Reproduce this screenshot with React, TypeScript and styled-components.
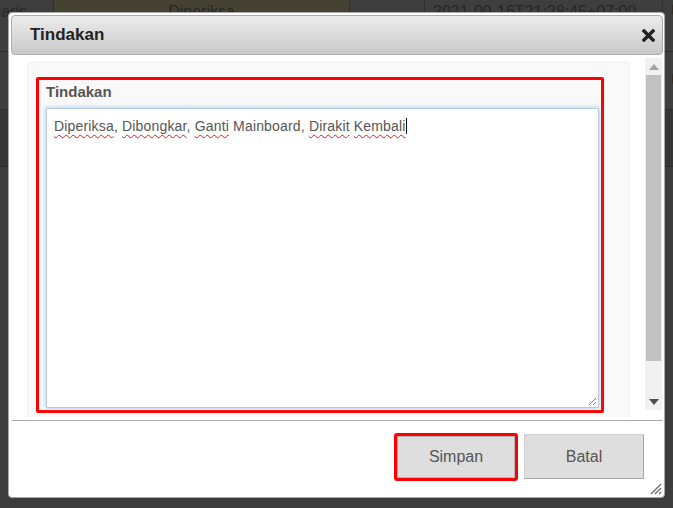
import styled, { createGlobalStyle } from 'styled-components'

const GlobalStyle = createGlobalStyle`
  html, body {
    margin: 0;
    padding: 0;
    background: #3c3c3c;
  }
  * {
    box-sizing: border-box;
  }
`

const App = () => {
  return (
    <>
      <GlobalStyle />
      <Page>
        {/* table behind the modal overlay */}
        <BackTable>
          <BackRow $height={80}>
            <BackCell $width={54} $align="right">
              garis
            </BackCell>
            <BackCell $width={296} $align="center" $olive>
              Diperiksa
            </BackCell>
            <BackCell $width={75} />
            <BackCell $width={238}>2021-09-16T21:28:45+07:00</BackCell>
            <BackCell $width={10}>U</BackCell>
          </BackRow>
          <BackRow $height={58}>
            <BackCell $width={54} $align="right">
              i
            </BackCell>
            <BackCell $width={609} />
            <BackCell $width={10}>U</BackCell>
          </BackRow>
          <BackRow $height={57} $dark />
        </BackTable>

        <Dialog>
          <TitleBar>
            <Title>Tindakan</Title>
            <CloseButton aria-label="close">
              <svg width="13" height="13" viewBox="0 0 13 13">
                <path
                  d="M2 2 L11 11 M11 2 L2 11"
                  stroke="#222"
                  strokeWidth="3.4"
                  strokeLinecap="square"
                />
              </svg>
            </CloseButton>
          </TitleBar>

          <Body>
            <Panel>
              <Highlight>
                <FieldLabel>Tindakan</FieldLabel>
                <TextBox role="textbox">
                  <Misspelled>Diperiksa</Misspelled>, <Misspelled>Dibongkar</Misspelled>,{' '}
                  <Misspelled>Ganti</Misspelled> Mainboard, <Misspelled>Dirakit</Misspelled>{' '}
                  <Misspelled>Kembali</Misspelled>
                  <Caret />
                  <TextGrip>
                    <svg width="10" height="10" viewBox="0 0 10 10">
                      <path d="M9 2 L2 9 M9 6 L6 9" stroke="#777" strokeWidth="1" />
                    </svg>
                  </TextGrip>
                </TextBox>
              </Highlight>
            </Panel>
            <Scrollbar>
              <ScrollArrow>
                <svg width="10" height="6" viewBox="0 0 10 6">
                  <path d="M0 6 L5 0 L10 6 Z" fill="#a3a3a3" />
                </svg>
              </ScrollArrow>
              <Track>
                <Thumb />
              </Track>
              <ScrollArrow>
                <svg width="10" height="6" viewBox="0 0 10 6">
                  <path d="M0 0 L10 0 L5 6 Z" fill="#505050" />
                </svg>
              </ScrollArrow>
            </Scrollbar>
          </Body>

          <Separator />

          <Footer>
            <Button $primary>Simpan</Button>
            <Button>Batal</Button>
          </Footer>

          <DialogGrip>
            <svg width="14" height="14" viewBox="0 0 14 14">
              <path
                d="M13 3 L3 13 M13 7 L7 13 M13 11 L11 13"
                stroke="#666"
                strokeWidth="1.2"
              />
            </svg>
          </DialogGrip>
        </Dialog>
      </Page>
    </>
  )
}

export default App

const Page = styled.div`
  position: relative;
  width: 673px;
  height: 508px;
  overflow: hidden;
  background: #3c3c3c;
  font-family: 'Liberation Sans', Arial, sans-serif;
`

const BackTable = styled.div`
  display: flex;
  flex-direction: column;
  margin-top: -28px;
`

const BackRow = styled.div<{ $height?: number; $dark?: boolean }>`
  display: flex;
  height: ${(p) => p.$height || 50}px;
  border-bottom: 1px solid #2e2e2e;
  background: ${(p) => (p.$dark ? '#353535' : '#3e3e3e')};
`

const BackCell = styled.div<{
  $width: number
  $align?: string
  $olive?: boolean
}>`
  flex: 0 0 ${(p) => p.$width}px;
  display: flex;
  align-items: center;
  justify-content: ${(p) =>
    p.$align === 'center'
      ? 'center'
      : p.$align === 'right'
        ? 'flex-end'
        : 'flex-start'};
  padding: 0 ${(p) => (p.$align === 'right' ? '26px' : '8px')} 0 8px;
  border-right: 1px solid #2f2f2f;
  background: ${(p) => (p.$olive ? '#454232' : 'transparent')};
  color: #262626;
  font-size: 16px;
  white-space: nowrap;
  overflow: hidden;
`

const Dialog = styled.div`
  position: absolute;
  left: 8px;
  top: 12px;
  width: 657px;
  height: 486px;
  background: #fff;
  border: 1px solid #a9a9a9;
  border-radius: 4px;
  display: flex;
  flex-direction: column;
`

const TitleBar = styled.div`
  height: 40px;
  margin: 2px 1px 0 2px;
  border: 1px solid #adadad;
  border-radius: 4px;
  background: linear-gradient(#ececec, #c9c9c9);
  display: flex;
  align-items: center;
  justify-content: space-between;
  padding: 0 7px 0 18px;
`

const Title = styled.h2`
  margin: 0;
  font-size: 17px;
  font-weight: bold;
  color: #222;
`

const CloseButton = styled.span`
  display: flex;
  align-items: center;
`

const Body = styled.div`
  height: 362px;
  display: flex;
  align-items: flex-start;
  padding: 0 2px 0 18px;
  overflow: hidden;
`

const Panel = styled.div`
  flex: 0 0 603px;
  margin-top: 7px;
  height: 420px;
  background: #f9f9f9;
  border: 1px solid #efefef;
  border-radius: 2px;
  padding: 14px 25px 0 8px;
`

const Highlight = styled.div`
  width: 568px;
  height: 336px;
  border: 3px solid #ff0000;
  border-radius: 2px;
  padding: 2px 2px 2px 7px;
  display: flex;
  flex-direction: column;
`

const FieldLabel = styled.label`
  font-size: 15px;
  font-weight: bold;
  color: #555;
  line-height: 20px;
`

const TextBox = styled.div`
  position: relative;
  margin-top: 6px;
  height: 300px;
  background: #fff;
  border: 1px solid #b4cbe0;
  box-shadow: 0 0 5px rgba(102, 175, 233, 0.6);
  padding: 7px 7px;
  font-size: 14px;
  letter-spacing: 0.17px;
  line-height: 20px;
  color: #555;
`

const Misspelled = styled.span`
  text-decoration: underline wavy #e01b1b;
  text-decoration-thickness: 1px;
  text-underline-offset: 3px;
`

const Caret = styled.span`
  display: inline-block;
  width: 1px;
  height: 16px;
  background: #111;
  vertical-align: -3px;
`

const TextGrip = styled.span`
  position: absolute;
  right: 1px;
  bottom: 1px;
  display: flex;
`

const Scrollbar = styled.div`
  flex: 0 0 17px;
  margin: 3px 0 0 15px;
  height: 352px;
  background: #f1f1f1;
  display: flex;
  flex-direction: column;
`

const ScrollArrow = styled.div`
  height: 17px;
  display: flex;
  align-items: center;
  justify-content: center;
`

const Track = styled.div`
  flex: 1;
  display: flex;
  flex-direction: column;
`

const Thumb = styled.div`
  height: 286px;
  margin: 0 1px;
  background: #c1c1c1;
`

const Separator = styled.hr`
  margin: 3px 1px 0 3px;
  border: 0;
  border-top: 1px solid #aaa;
  height: 0;
`

const Footer = styled.div`
  display: flex;
  justify-content: flex-end;
  align-items: flex-start;
  gap: 6px;
  padding: 12px 20px 0 0;
`

const Button = styled.button<{ $primary?: boolean }>`
  width: ${(p) => (p.$primary ? '124px' : '120px')};
  height: ${(p) => (p.$primary ? '48px' : '45px')};
  margin-top: ${(p) => (p.$primary ? '0' : '1px')};
  background: #dedede;
  border: ${(p) => (p.$primary ? '3px solid #ff0000' : '1px solid')};
  border-color: ${(p) => (p.$primary ? '#ff0000' : '#cfcfcf #a6a6a6 #a6a6a6 #cfcfcf')};
  border-radius: ${(p) => (p.$primary ? '3px' : '1px')};
  box-shadow: ${(p) => (p.$primary ? 'inset 0 0 0 1px #b5b5b5' : 'none')};
  font-family: 'Liberation Sans', Arial, sans-serif;
  font-size: 16px;
  color: #555;
  padding: 0;
`

const DialogGrip = styled.span`
  position: absolute;
  right: 2px;
  bottom: 2px;
  display: flex;
`
